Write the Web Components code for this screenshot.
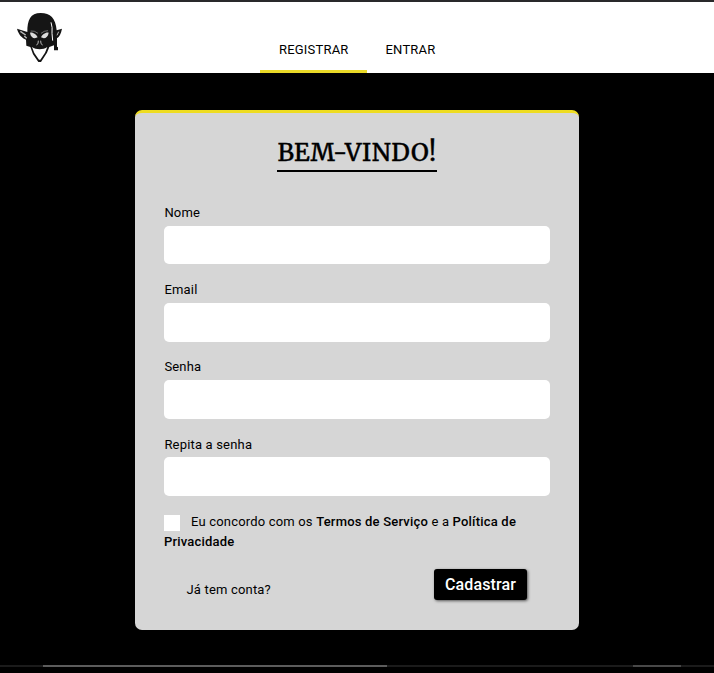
<!DOCTYPE html>
<html lang="pt-BR">
<head>
<meta charset="utf-8">
<title>Registrar</title>
<style>
html,body{margin:0;height:100%;overflow:hidden;background:#000}
body{font:13px/20px Roboto,sans-serif;letter-spacing:.18px;color:#000}
</style>
</head>
<body>
<app-page>
  <app-header slot="header">
    <nav-tab active>REGISTRAR</nav-tab>
    <nav-tab>ENTRAR</nav-tab>
  </app-header>
  <register-card heading="BEM-VINDO!">
    <text-field>Nome</text-field>
    <text-field>Email</text-field>
    <text-field>Senha</text-field>
    <text-field type="password">Repita a senha</text-field>
    <terms-check>Eu concordo com os <b>Termos de Serviço</b> e a <b>Política de</b> <b>Privacidade</b></terms-check>
    <span slot="link">Já tem conta?</span>
    <submit-button slot="action">Cadastrar</submit-button>
  </register-card>
  <bottom-line slot="footer"></bottom-line>
</app-page>
<script>
const define = (name, html) => customElements.define(name, class extends HTMLElement {
  constructor() {
    super();
    this.attachShadow({mode: 'open'}).innerHTML = html;
  }
  connectedCallback() {
    const h = this.shadowRoot.querySelector('h1');
    if (h) h.textContent = this.getAttribute('heading');
    const input = this.shadowRoot.querySelector('input[data-field]');
    if (input) {
      input.type = this.getAttribute('type') || 'text';
      input.setAttribute('aria-label', this.textContent);
    }
  }
});

define('app-page', `<style>
:host{display:flex;flex-direction:column;height:673px;background:#000}
main{flex:1;display:flex;justify-content:center;align-items:flex-start;padding-top:37px}
</style><slot name="header"></slot><main><slot></slot></main><slot name="footer"></slot>`);

define('goblin-logo', `<style>:host{display:block;width:48px;height:52px}svg{display:block}</style>
<svg width="48" height="52" viewBox="48 36 144 156" aria-hidden="true">
<path fill="#151515" d="M82 96 C82 60 91 39 122 39 C151 39 167 54 170 91 L186 86 C183 101 178 111 171 115 L171 140 L174 142 L174 151 L162 151 L162 136 L148 141 L141 158 L123 186 L115 186 L99 163 L91 141 L79 137 L78 119 C66 114 56 104 51 86 Z"/>
<path fill="#fff" d="M96 141 C108 150 130 150 142 141 L135 158 L121 179 L117 179 L103 159Z"/>
<path fill="#dadada" d="M90 98 C99 96 110 104 113 112 C103 118 92 113 90 98Z M146 98 C137 96 126 104 123 112 C133 118 144 113 146 98Z"/>
<path fill="none" stroke="#999" stroke-width="2" d="M92 93 Q103 91 114 100 M123 100 Q132 92 144 92"/>
<path fill="none" stroke="#fff" stroke-width="3" d="M153 67 Q158 82 156 100 L158 122"/>
<path fill="none" stroke="#bbb" stroke-width="4" d="M61 94 L77 105 M73 108 L80 115"/>
<path fill="none" stroke="#bbb" stroke-width="3" d="M176 95 L171 106 M115 122 L114 131 L109 135 M122 122 L123 131 L128 135"/>
</svg>`);

define('app-header', `<style>
:host{display:flex;box-sizing:border-box;height:73px;flex:none;background:#fff;border-top:2px solid #29292b;padding-left:16px}
goblin-logo{margin-top:10px}
nav{display:flex;margin-left:196px}
</style><goblin-logo></goblin-logo><nav><slot></slot></nav>`);

define('nav-tab', `<style>
:host{display:flex;box-sizing:border-box;height:71px;width:107px;padding:38px 0 0 19px;border-bottom:3px solid transparent;letter-spacing:.2px}
:host([active]){border-color:#e9d927}
:host(:not([active])){padding-left:18.5px}
</style><slot></slot>`);

define('register-card', `<style>
:host{display:block;box-sizing:border-box;width:444px;height:520px;background:#d6d6d6;border-top:3px solid #eedc20;border-radius:7px;padding:22px 29px 0}
h1{width:160px;height:35px;margin:0 auto 29.7px;border-bottom:2px solid #000;font:500 24.5px/35px Merriweather,"DejaVu Serif Condensed","DejaVu Serif",serif;letter-spacing:.4px;-webkit-text-stroke:.35px #000;white-space:nowrap;text-align:center}
footer{display:flex;justify-content:space-between;align-items:flex-start;padding:18px 23px 0 22.5px}
.link{padding-top:11px}
</style><h1></h1><slot></slot><footer><div class="link"><slot name="link"></slot></div><slot name="action"></slot></footer>`);

define('text-field', `<style>
:host{display:block;height:77.2px}
label{display:block;box-sizing:border-box;height:24px;padding:1.3px 0 0 .4px}
input{display:block;box-sizing:border-box;width:100%;height:38.7px;border:0;border-radius:5px;background:#fff;padding:0 10px;outline:0}
</style><label><slot></slot></label><input data-field>`);

define('terms-check', `<style>
:host{display:block;box-sizing:border-box;height:40.5px;padding-top:1.5px}
input{appearance:none;width:16px;height:16px;margin:0 11px 0 0;background:#fff;vertical-align:-5px}
::slotted(b){font-weight:500;letter-spacing:.2px}
p{margin:0;line-height:20px}
</style><p><input type="checkbox" aria-label="Aceito os termos"><slot></slot></p>`);

define('submit-button', `<style>
:host{display:block}
button{display:block;width:93px;height:31px;border:0;border-radius:3px;padding:0;background:#000;color:#fff;font:500 16px/31px Roboto,sans-serif;letter-spacing:.1px;box-shadow:1px 1px 3px rgba(0,0,0,.6)}
</style><button><slot></slot></button>`);

define('bottom-line', `<style>
:host{display:grid;grid-template-columns:43px 344px 246px 48px 1fr;height:2px;flex:none;margin-bottom:6px}
i{background:#1b1b1b}.a{background:#5c5c5c}.b{background:#484848}
</style><i></i><i class="a"></i><i></i><i class="b"></i><i></i>`);
</script>
</body>
</html>
